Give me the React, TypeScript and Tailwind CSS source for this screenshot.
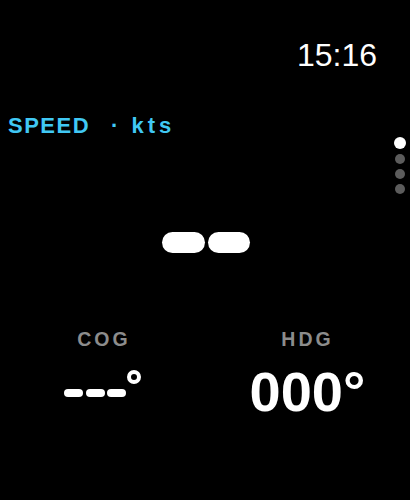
import React from "react";

function Pill({ className }: { className: string }) {
  return <div className={`rounded-full bg-white ${className}`} />;
}

export default function App() {
  const dots = [true, false, false, false];

  return (
    <div className="relative h-[500px] w-[410px] overflow-hidden bg-black font-['Liberation_Sans',Arial,sans-serif] text-white">
      {/* status time */}
      <div className="flex justify-end pr-[33px] pt-[39px]">
        <span className="text-[32px] leading-none">15:16</span>
      </div>

      {/* metric title */}
      <div className="mt-[44px] flex pl-[8px] text-[22px] font-bold leading-none text-[#40c8f4]">
        <span className="tracking-[1.5px]">SPEED</span>
        <span className="ml-[21px]">·</span>
        <span className="ml-[13px] tracking-[4px]">kts</span>
      </div>

      {/* speed value (no data) */}
      <div className="mt-[95px] flex justify-center gap-[3px] pl-[2px]">
        <Pill className="h-[21px] w-[43px]" />
        <Pill className="h-[21px] w-[42px]" />
      </div>

      {/* course / heading */}
      <div className="mt-[77px] grid grid-cols-2">
        <div className="flex flex-col items-center">
          <span className="pl-[3px] text-[19.5px] font-bold leading-none tracking-[3px] text-[#8c8c8c]">
            COG
          </span>
          <div className="mt-[14px] flex h-[56px] items-start">
            <Pill className="mt-[25px] h-[8px] w-[19px]" />
            <Pill className="ml-[3px] mt-[25px] h-[8px] w-[19px]" />
            <Pill className="ml-[2px] mt-[25px] h-[8px] w-[19px]" />
            <div className="ml-[1px] mt-[6px] h-[14px] w-[14px] rounded-full border-[4px] border-white" />
          </div>
        </div>
        <div className="-ml-[3px] flex flex-col items-center">
          <span className="pl-[3px] text-[19.5px] font-bold leading-none tracking-[3px] text-[#8c8c8c]">
            HDG
          </span>
          <span className="ml-[3px] mt-[14px] text-[56px] font-bold leading-none">000°</span>
        </div>
      </div>

      {/* page indicator */}
      <div className="absolute left-[394px] top-[137px] flex w-[12px] flex-col items-center gap-[5px]">
        {dots.map((on, i) => (
          <div
            key={i}
            className={
              on
                ? "h-[12px] w-[12px] rounded-full bg-white"
                : "h-[10px] w-[10px] rounded-full bg-[#5c5c5c]"
            }
          />
        ))}
      </div>
    </div>
  );
}
